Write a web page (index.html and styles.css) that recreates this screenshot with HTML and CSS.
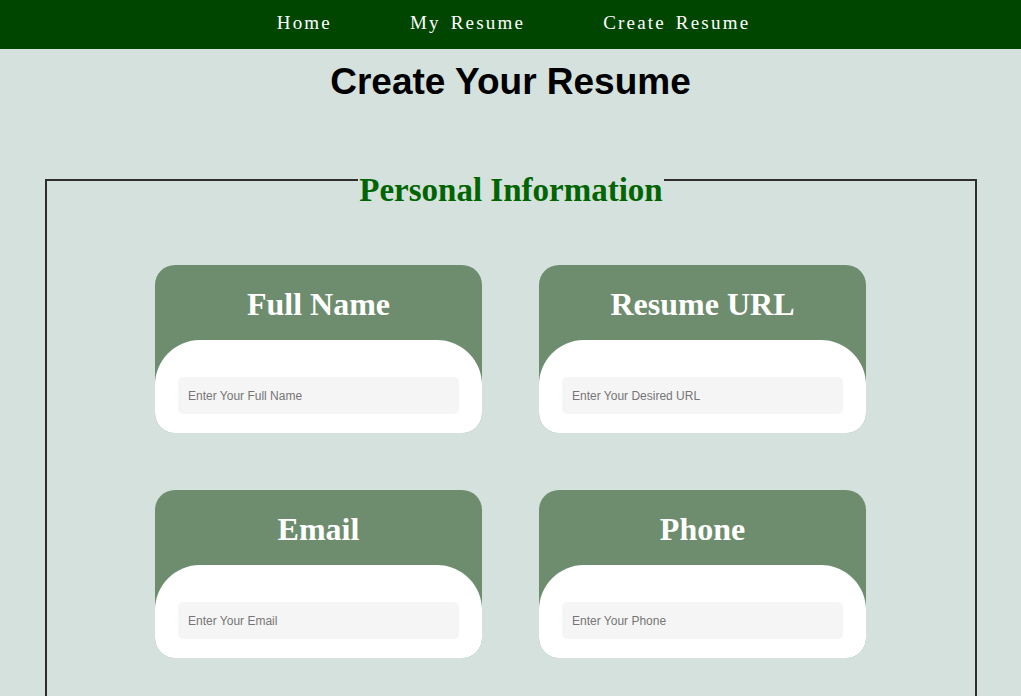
FILE: index.html
```html
<!DOCTYPE html>
<html lang="en">
<head>
<meta charset="utf-8">
<title>Create Your Resume</title>
<link rel="stylesheet" href="styles.css">
</head>
<body>
<nav class="topnav">
  <a class="navlink" href="#">Home</a>
  <a class="navlink" href="#">My Resume</a>
  <a class="navlink" href="#">Create Resume</a>
</nav>
<h1 class="page-title">Create Your Resume</h1>
<form class="resume-form">
  <fieldset class="section">
    <legend class="section-legend">Personal Information</legend>
    <div class="card-grid">
      <div class="card">
        <h2 class="card-title">Full Name</h2>
        <div class="card-body"><input class="field" type="text" placeholder="Enter Your Full Name"></div>
      </div>
      <div class="card">
        <h2 class="card-title">Resume URL</h2>
        <div class="card-body"><input class="field" type="text" placeholder="Enter Your Desired URL"></div>
      </div>
      <div class="card">
        <h2 class="card-title">Email</h2>
        <div class="card-body"><input class="field" type="email" placeholder="Enter Your Email"></div>
      </div>
      <div class="card">
        <h2 class="card-title">Phone</h2>
        <div class="card-body"><input class="field" type="tel" placeholder="Enter Your Phone"></div>
      </div>
    </div>
  </fieldset>
</form>
</body>
</html>
```
FILE: styles.css
```css
* { box-sizing: border-box; }
html, body { margin: 0; padding: 0; }
body {
  background: #d4e1dc;
  font-family: "Liberation Sans", Arial, sans-serif;
  overflow: hidden;
}
.topnav {
  height: 49px;
  background: #004600;
  display: flex;
  justify-content: center;
  align-items: center;
  gap: 78px;
  padding-left: 6px;
  padding-bottom: 4px;
}
.navlink {
  color: #ffffff;
  text-decoration: none;
  font-family: "Liberation Serif", "Times New Roman", serif;
  font-size: 19px;
  letter-spacing: 2.2px;
  word-spacing: 3px;
}
.page-title {
  margin: 12px 0 0;
  text-align: center;
  font-family: "Liberation Sans", Arial, sans-serif;
  font-weight: bold;
  font-size: 37px;
  line-height: 42px;
  color: #000;
}
.resume-form { margin: 0; }
.section {
  margin: 47px 44px 0 45px;
  padding: 0 0 60px;
  border: 2px solid #2e2e2e;
  min-width: 0;
}
.section-legend {
  margin: 0 auto;
  padding: 22px 1px 0;
  font-family: "Liberation Serif", "Times New Roman", serif;
  font-weight: bold;
  font-size: 33px;
  line-height: 37px;
  color: #006400;
}
.card-grid {
  margin-top: 56px;
  padding-right: 1px;
  display: grid;
  grid-template-columns: 327px 327px;
  column-gap: 57px;
  row-gap: 57px;
  justify-content: center;
}
.card {
  height: 168px;
  background: #6e8d6e;
  border-radius: 20px;
  display: flex;
  flex-direction: column;
}
.card-title {
  margin: 0;
  height: 75px;
  padding-top: 21px;
  text-align: center;
  font-family: "Liberation Serif", "Times New Roman", serif;
  font-weight: bold;
  font-size: 32px;
  line-height: 37px;
  color: #ffffff;
}
.card-body {
  flex: 1;
  background: #ffffff;
  border-radius: 45px 45px 20px 20px;
  padding: 37px 23px 0;
}
.field {
  display: block;
  width: 100%;
  height: 37px;
  border: none;
  border-radius: 5px;
  background: #f5f5f5;
  padding: 0 10px;
  font-family: "Liberation Sans", Arial, sans-serif;
  font-size: 12px;
  color: #333;
  outline: none;
}
.field::placeholder { color: #757575; }
```
